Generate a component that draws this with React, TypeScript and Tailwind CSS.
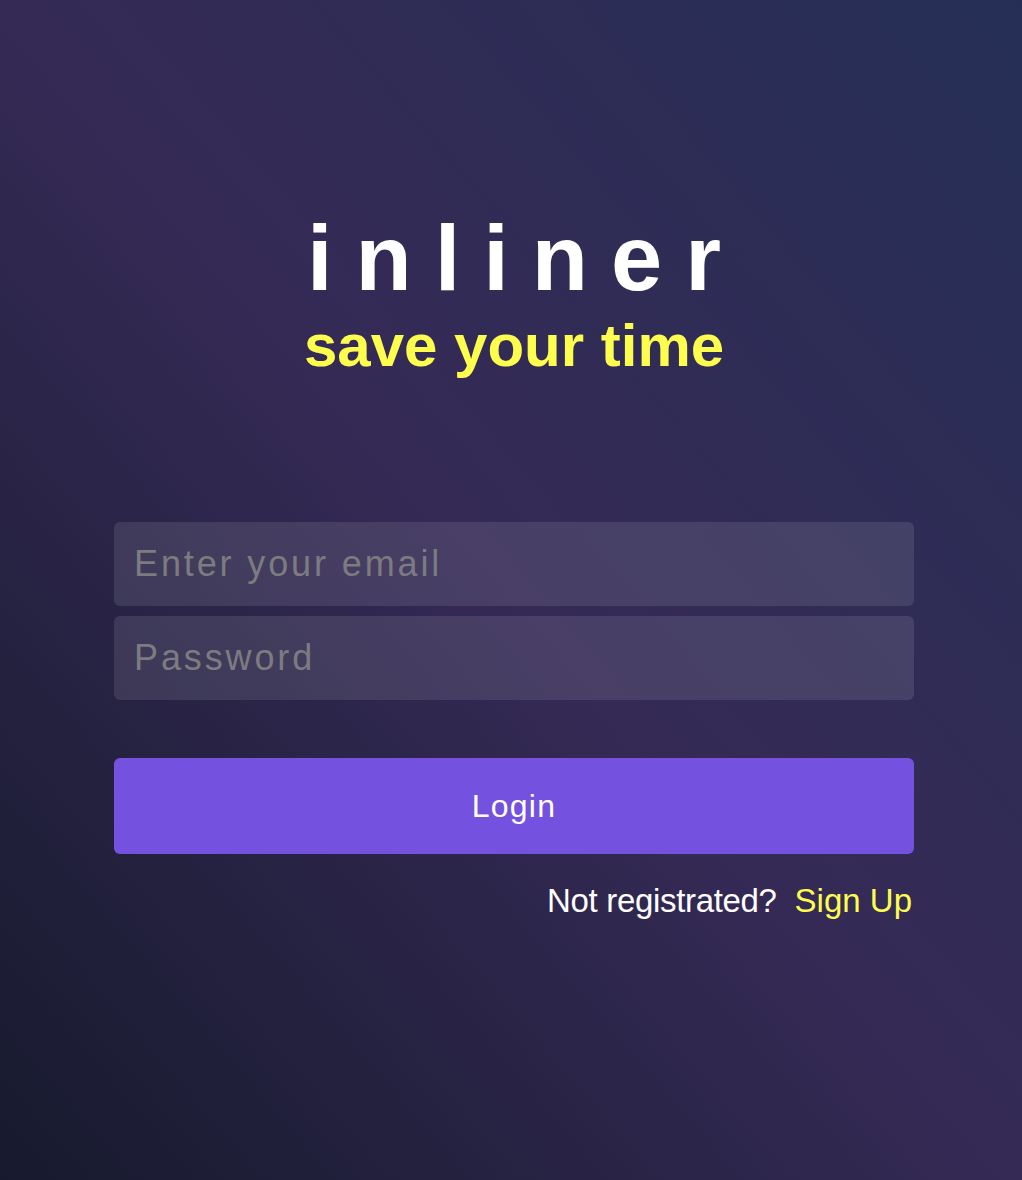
export default function App() {
  return (
    <div className="min-h-[1180px] w-full bg-linear-to-tr from-[#171a2e] via-[#352a56] to-[#252f56] font-['Liberation_Sans',Arial,sans-serif] pl-[6px]">
      <div className="mx-auto flex w-[800px] flex-col items-center pt-[212px]">
        {/* Logo */}
        <h1 className="text-[92px] font-bold leading-none text-white">
          <span className="mr-[-0.25em] tracking-[0.25em]">inliner</span>
        </h1>
        <p className="mt-[12px] text-[60px] font-bold leading-none text-[#fdfd4e]">
          save your time
        </p>

        {/* Form */}
        <form className="mt-[146px] flex w-full flex-col" onSubmit={(e) => e.preventDefault()}>
          <input
            type="email"
            placeholder="Enter your email"
            className="h-[84px] w-full rounded-md bg-white/10 px-[20px] text-[36px] tracking-[0.08em] text-white outline-none placeholder:text-[#7c7c80]"
          />
          <input
            type="password"
            placeholder="Password"
            className="mt-[10px] h-[84px] w-full rounded-md bg-white/10 px-[20px] text-[36px] tracking-[0.08em] text-white outline-none placeholder:text-[#7c7c80]"
          />
          <button
            type="submit"
            className="mt-[58px] h-[96px] w-full rounded-md bg-[#7551e0] text-[32px] tracking-[0.04em] text-white"
          >
            Login
          </button>
        </form>

        <div className="mt-[30px] flex w-full justify-end pr-[2px] text-[33px] leading-none">
          <span className="tracking-[-0.01em] text-white">Not registrated?</span>
          <a href="#" className="ml-[18px] text-[#fdfd4e]">
            Sign Up
          </a>
        </div>
      </div>
    </div>
  );
}
